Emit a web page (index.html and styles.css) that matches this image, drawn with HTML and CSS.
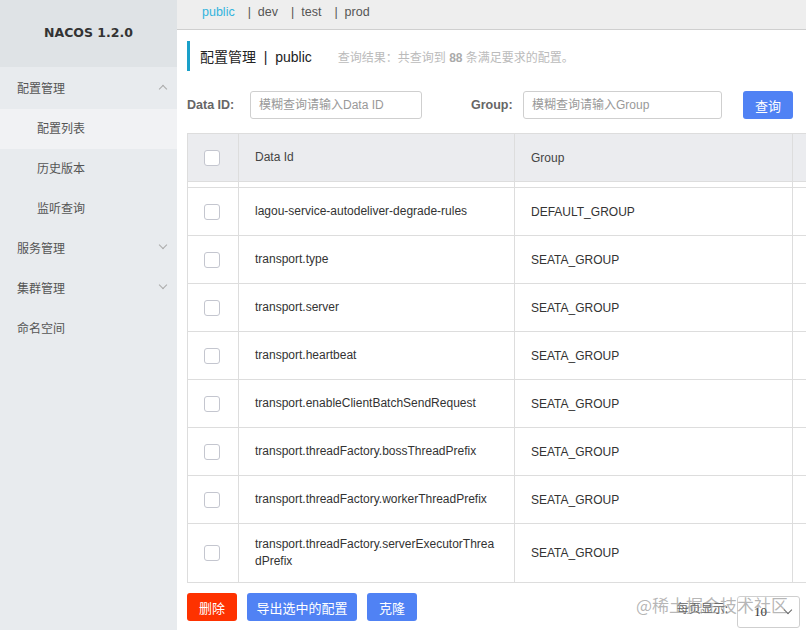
FILE: index.html
```html
<!DOCTYPE html>
<html lang="zh-CN">
<head>
    <meta charset="UTF-8">
    <title>Nacos 配置列表</title>
    <link rel="stylesheet" href="styles.css">
</head>
<body>
    <div class="layout">
        <!-- 左侧菜单 -->
        <aside class="sidebar">
            <div class="brand">NACOS 1.2.0</div>
            <div class="menu-item">配置管理<span class="arrow up"></span></div>
            <div class="menu-sub active">配置列表</div>
            <div class="menu-sub">历史版本</div>
            <div class="menu-sub">监听查询</div>
            <div class="menu-item">服务管理<span class="arrow"></span></div>
            <div class="menu-item">集群管理<span class="arrow"></span></div>
            <div class="menu-item">命名空间</div>
        </aside>

        <main class="main">
            <div class="ns-bar">
                <span class="ns current">public</span>
                <span class="ns">|&nbsp; dev</span>
                <span class="ns">|&nbsp; test</span>
                <span class="ns">|&nbsp; prod</span>
            </div>

            <div class="content">
                <div class="page-title">
                    <span class="title-text">配置管理 &nbsp;|&nbsp; public</span>
                    <span class="result">查询结果：共查询到 <b>88</b> 条满足要求的配置。</span>
                </div>

                <div class="search">
                    <label class="id-label">Data ID:</label>
                    <div class="input data-id">模糊查询请输入Data ID</div>
                    <label class="group-label">Group:</label>
                    <div class="input group">模糊查询请输入Group</div>
                    <button class="btn primary query">查询</button>
                </div>

                <div class="table">
                    <div class="thead">
                        <div class="cell check"><span class="box"></span></div>
                        <div class="cell id">Data Id</div>
                        <div class="cell grp">Group</div>
                        <div class="cell ops"></div>
                    </div>
                    <div class="gap">
                        <div class="cell check"></div>
                        <div class="cell id"></div>
                        <div class="cell grp"></div>
                        <div class="cell ops"></div>
                    </div>
                    <div class="tbody" id="rows"></div>
                </div>

                <div class="footer">
                    <button class="btn danger">删除</button>
                    <button class="btn primary export">导出选中的配置</button>
                    <button class="btn primary clone">克隆</button>
                    <div class="pager">
                        <span class="page-label">每页显示:</span>
                        <div class="page-select">10<span class="arrow"></span></div>
                    </div>
                </div>
            </div>
        </main>
    </div>
    <div class="watermark">@稀土掘金技术社区</div>

    <script>
        const rows = [
            ['lagou-service-autodeliver-degrade-rules', 'DEFAULT_GROUP'],
            ['transport.type', 'SEATA_GROUP'],
            ['transport.server', 'SEATA_GROUP'],
            ['transport.heartbeat', 'SEATA_GROUP'],
            ['transport.enableClientBatchSendRequest', 'SEATA_GROUP'],
            ['transport.threadFactory.bossThreadPrefix', 'SEATA_GROUP'],
            ['transport.threadFactory.workerThreadPrefix', 'SEATA_GROUP'],
            ['transport.threadFactory.serverExecutorThreadPrefix', 'SEATA_GROUP']
        ];
        const body = document.getElementById('rows');
        rows.forEach(([id, group]) => {
            const row = document.createElement('div');
            row.className = 'row';
            row.innerHTML =
                '<div class="cell check"><span class="box"></span></div>' +
                '<div class="cell id">' + id + '</div>' +
                '<div class="cell grp">' + group + '</div>' +
                '<div class="cell ops"></div>';
            body.appendChild(row);
        });
    </script>
</body>
</html>
```

FILE: styles.css
```css
body {
    margin: 0;
    font-family: "Liberation Sans", "Noto Sans CJK SC", sans-serif;
    font-size: 12px;
    color: #333;
    background: #fff;
    overflow: hidden;
    height: 630px;
}
.layout {
    display: flex;
    height: 630px;
}
.sidebar {
    width: 177px;
    flex-shrink: 0;
    background-color: #e8ebee;
}
.brand {
    height: 67px;
    line-height: 66px;
    margin-bottom: 2px;
    text-align: center;
    font-family: "DejaVu Sans", sans-serif;
    font-weight: bold;
    font-size: 12.5px;
    color: #333;
    background-color: #dfe3e6;
}
.menu-item, .menu-sub {
    height: 40px;
    line-height: 40px;
    font-size: 12px;
    color: #555;
    position: relative;
}
.menu-item {
    padding-left: 17px;
}
.menu-sub {
    padding-left: 37px;
}
.menu-sub.active {
    background-color: #f1f2f4;
}
.arrow {
    position: absolute;
    right: 11px;
    top: 13px;
    width: 5px;
    height: 5px;
    border-right: 1px solid #aaa;
    border-bottom: 1px solid #aaa;
    transform: rotate(45deg);
}
.arrow.up {
    top: 17px;
    transform: rotate(-135deg);
}

.main {
    flex: 1;
    min-width: 0;
}
.ns-bar {
    height: 30px;
    box-sizing: border-box;
    padding: 0 0 6px 25px;
    background-color: #eeeeee;
    border-bottom: 1px solid #cfcfcf;
    display: flex;
    align-items: center;
    font-size: 12.5px;
    color: #555;
}
.ns {
    margin-right: 13px;
}
.ns.current {
    color: #33b4dd;
}
.content {
    padding-left: 10px;
}
.page-title {
    margin-top: 11px;
    height: 30px;
    border-left: 3px solid #1aa0c9;
    display: flex;
    align-items: center;
}
.title-text {
    margin-left: 10px;
    font-size: 14px;
    color: #222;
}
.result {
    margin-left: 26px;
    color: #bbb;
    font-size: 12px;
}
.result b {
    color: #aaa;
}
.search {
    margin-top: 20px;
    display: flex;
    align-items: center;
    height: 28px;
}
.search label {
    font-weight: bold;
    color: #666;
    font-size: 12.5px;
}
.id-label {
    width: 63px;
}
.group-label {
    width: 52px;
    margin-left: 49px;
}
.input {
    height: 28px;
    box-sizing: border-box;
    border: 1px solid #cfcfcf;
    border-radius: 3px;
    padding-left: 8px;
    line-height: 26px;
    color: #999;
    font-size: 12px;
}
.input.data-id {
    width: 172px;
}
.input.group {
    width: 199px;
}
.btn {
    height: 28px;
    border: none;
    border-radius: 3px;
    color: #fff;
    font-family: "Noto Sans CJK SC", sans-serif;
    font-size: 13px;
    padding: 0;
}
.btn.primary {
    background-color: #5082f4;
}
.btn.danger {
    background-color: #fe3200;
    width: 50px;
}
.query {
    margin-left: 21px;
    width: 50px;
}
.export {
    margin-left: 10px;
    width: 110px;
}
.clone {
    margin-left: 10px;
    width: 50px;
}

.table {
    margin-top: 14px;
    width: 680px;
    border-left: 1px solid #dddddd;
    border-top: 1px solid #dddddd;
}
.thead, .row, .gap {
    display: flex;
}
.thead {
    height: 47px;
    background-color: #ebecef;
    border-bottom: 1px solid #dddddd;
}
.gap {
    height: 5px;
}
.row {
    height: 47px;
    border-top: 1px solid #dddddd;
}
.row:last-child {
    height: 58px;
    border-bottom: 1px solid #dddddd;
}
.cell {
    box-sizing: border-box;
    display: flex;
    align-items: center;
    border-right: 1px solid #dddddd;
    padding-left: 16px;
    font-size: 12px;
    color: #333;
}
.cell.check {
    width: 51px;
}
.cell.id {
    width: 276px;
    line-height: 17px;
    padding-right: 18px;
    word-break: break-all;
}
.cell.grp {
    width: 278px;
}
.cell.ops {
    flex: 1;
}
.thead .cell {
    color: #444;
}
.box {
    width: 14px;
    height: 14px;
    border: 1px solid #c4c6cf;
    border-radius: 3px;
    background: #fff;
}

.footer {
    margin-top: 10px;
    display: flex;
    align-items: flex-start;
    width: 613px;
}
.footer .btn {
    flex-shrink: 0;
}
.pager {
    margin-left: auto;
    display: flex;
    align-items: flex-start;
    margin-top: 3px;
}
.page-label {
    color: #666;
    font-size: 12px;
    font-family: "Noto Sans CJK SC", sans-serif;
    margin-right: 9px;
    margin-top: 3px;
}
.page-select {
    position: relative;
    width: 63px;
    height: 32px;
    box-sizing: border-box;
    border: 1px solid #cfcfcf;
    border-radius: 3px;
    padding-left: 16px;
    line-height: 30px;
    font-size: 13px;
    font-family: "Liberation Serif", serif;
}
.page-select .arrow {
    top: 10px;
    right: 8px;
    border-color: #666;
}
.watermark {
    position: absolute;
    left: 636px;
    top: 592px;
    font-size: 17px;
    font-family: "Noto Sans CJK SC", sans-serif;
    color: rgba(120, 120, 120, 0.55);
    pointer-events: none;
}
```
